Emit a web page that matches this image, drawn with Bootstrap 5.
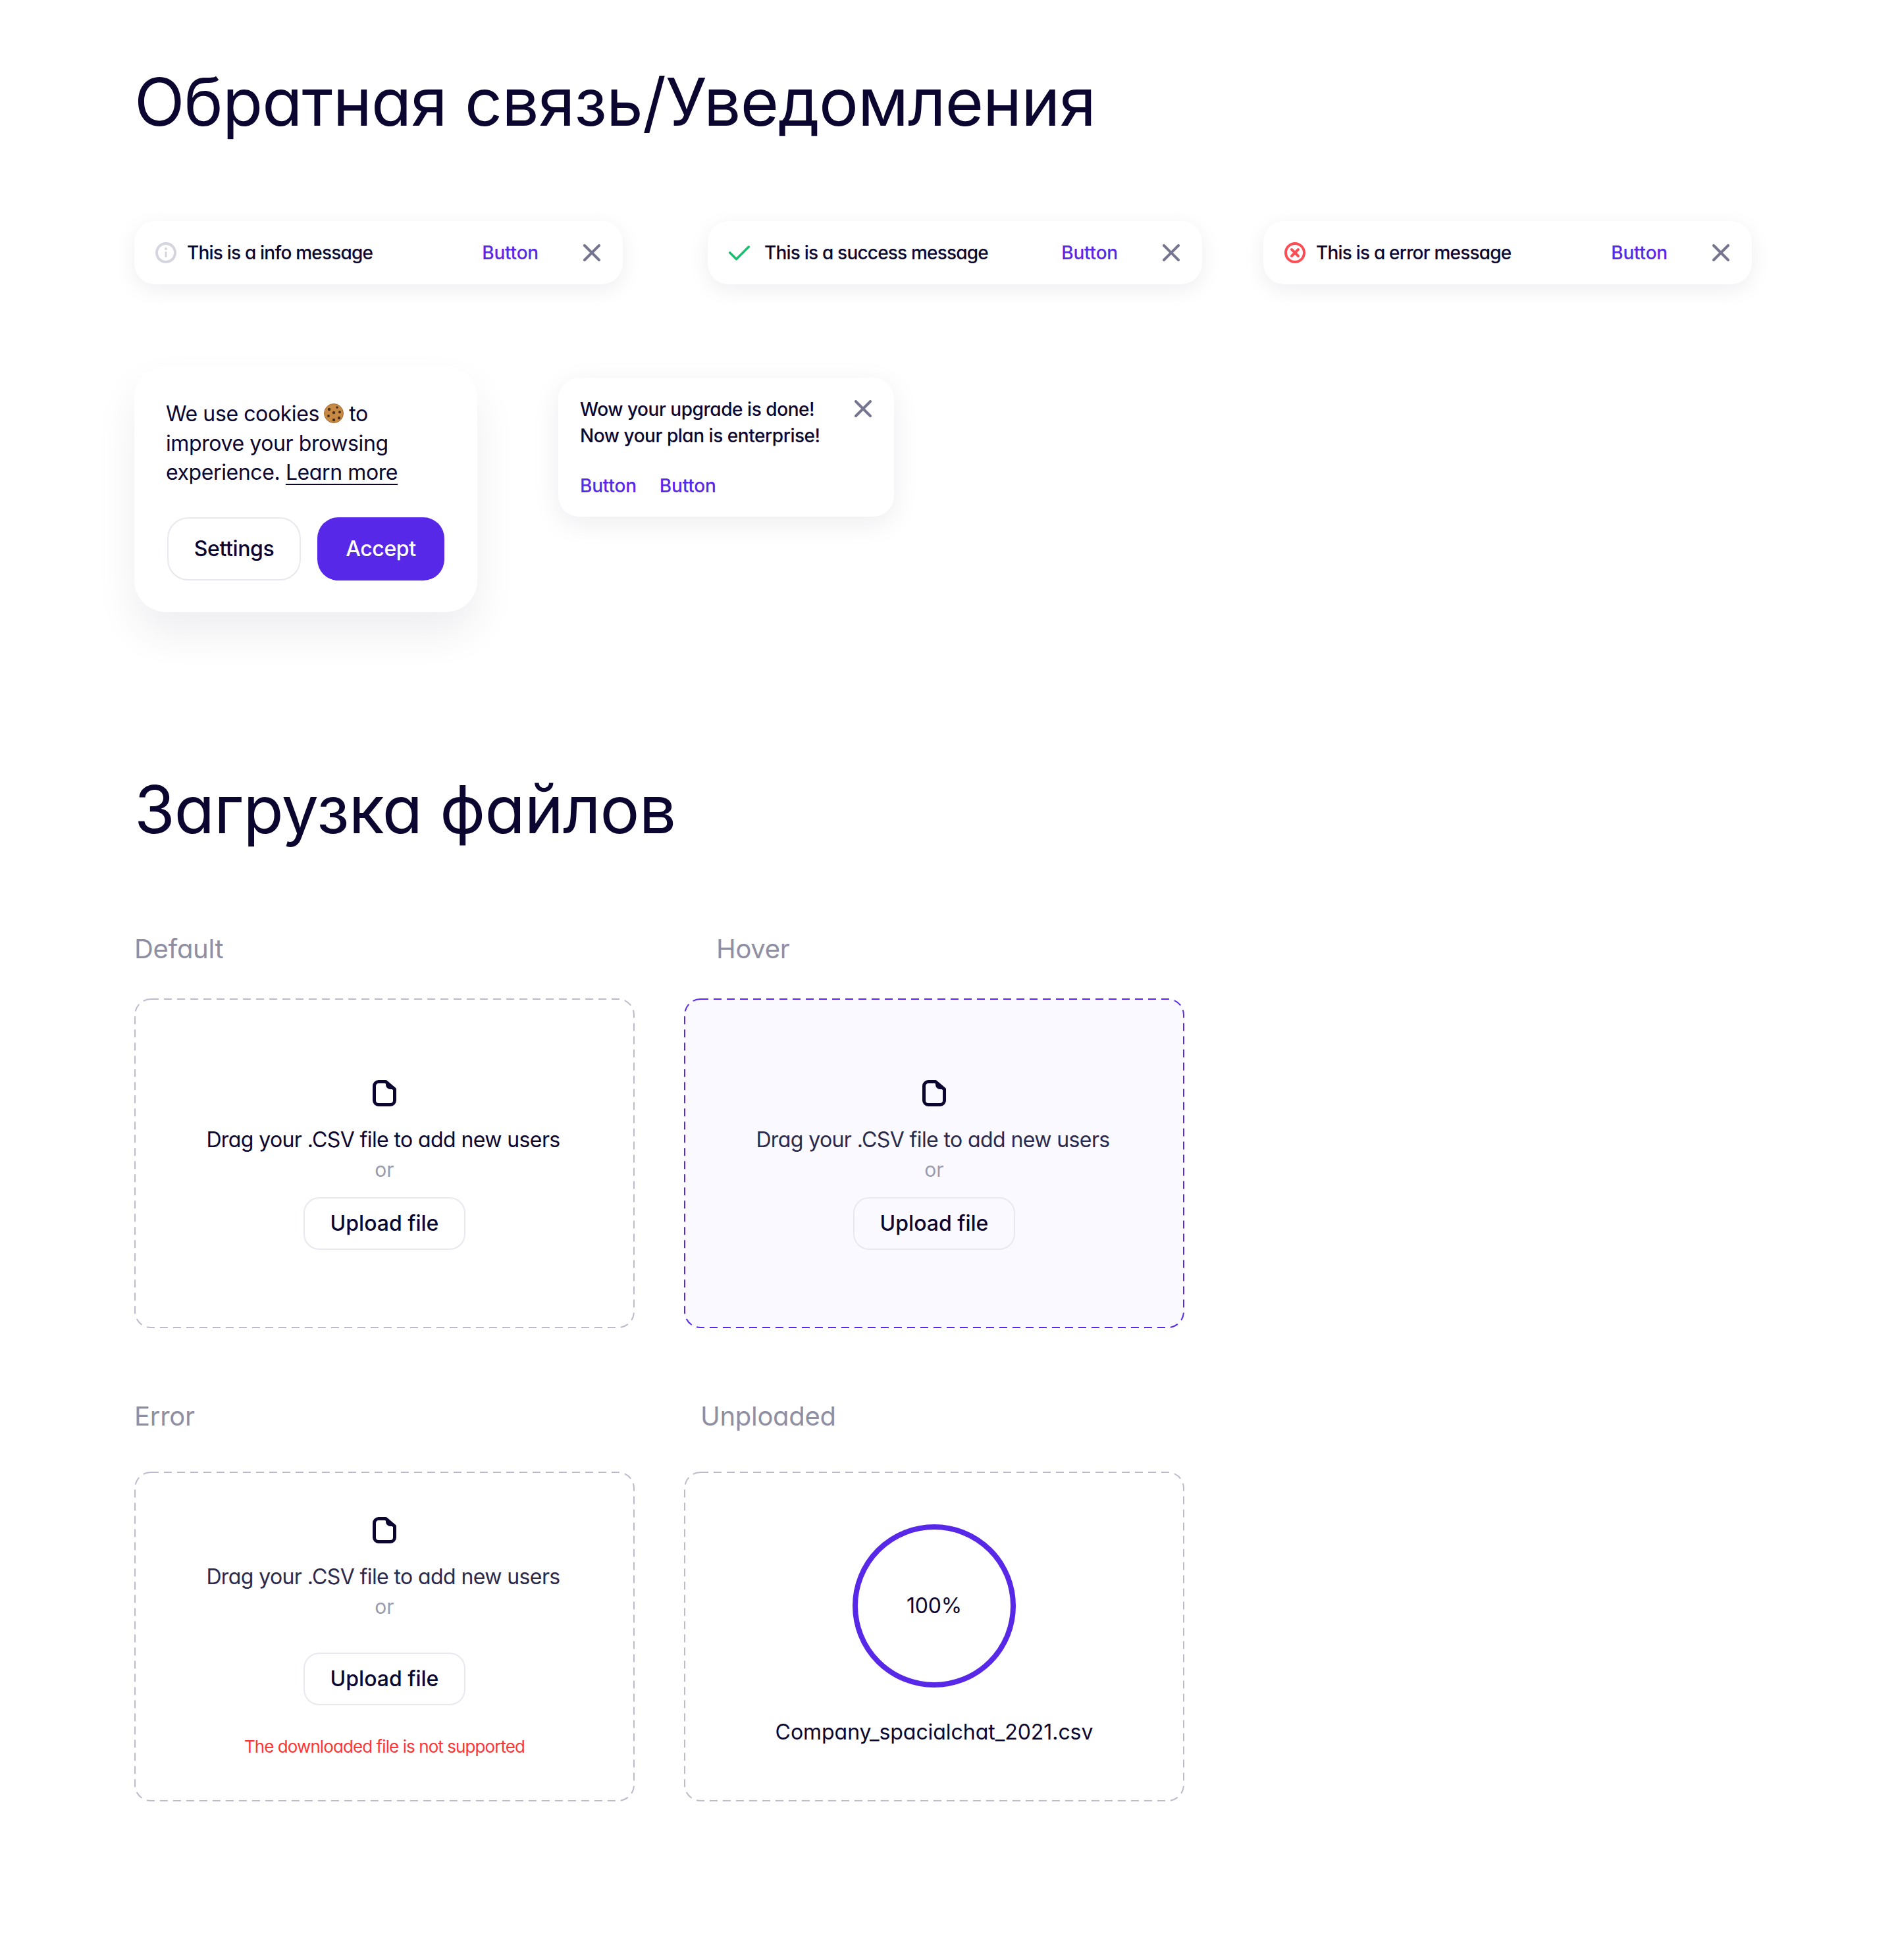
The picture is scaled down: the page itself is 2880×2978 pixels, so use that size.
<!DOCTYPE html>
<html lang="ru">
<head>
<meta charset="utf-8">
<title>Обратная связь/Уведомления</title>
<link href="https://cdn.jsdelivr.net/npm/bootstrap@5.3.0/dist/css/bootstrap.min.css" rel="stylesheet">
<style>
:root{--ink:#0b0630;--violet:#5728e8;--cross:#76758f;--muted:#8f8fa3;--line:#e8e8ef}
body{background:#fff;color:var(--ink);font-family:Inter,"Noto Sans",sans-serif;font-feature-settings:"cv11";}
.sheet{padding:95px 0 240px 204px;width:2880px}
.head-xl{font-size:100px;line-height:120px;font-weight:400;letter-spacing:-.9px;margin:0;white-space:nowrap;font-family:Inter,"Noto Sans",sans-serif}
.note-row{margin-top:121px}
.note{height:96px;border-radius:32px;background:#fff;box-shadow:0 8px 32px rgba(20,20,60,.07);font-size:28px;font-weight:500;letter-spacing:-.8px;white-space:nowrap}
.note-a{width:742px;margin-right:129px;padding:0 34px 0 32px}
.note-b{width:751px;margin-right:93px;padding:0 34px 0 32px}
.note-c{width:742px;padding:0 34px 0 32px}
.note-ico{width:32px;height:32px;flex:none}
.note-msg{margin-left:16px}
.note-msg-wide{margin-left:22px}
.link-act{color:var(--violet);font-size:28px;font-weight:500;letter-spacing:-.2px;padding:0;border:0;background:none;line-height:40px}
.x-btn{padding:0;border:0;background:none;line-height:0;flex:none}
.x-btn svg{width:26px;height:26px}
.x-gap{margin-left:68px}
.tiles{margin-top:124px;align-items:flex-start}
.cookie{width:521px;height:374px;border-radius:48px;padding:51px 48px 48px;background:#fff;box-shadow:0 32px 64px rgba(20,20,60,.07);border:0;font-size:32px;line-height:44.5px;letter-spacing:-.4px}
.cookie a{color:var(--ink);text-underline-offset:6px;text-decoration-thickness:2px}
.crumb{display:inline-block;width:30px;height:30px;vertical-align:-3px;margin:0 0 0 -2px}
.cookie-btns{margin-top:45px;padding-left:2px;gap:25px}
.btn-soft,.btn-main{height:96px;border-radius:32px;font-size:32px;font-weight:500;letter-spacing:-.4px;padding:0;display:flex;align-items:center;justify-content:center}
.btn-soft{width:203px;border:2px solid var(--line);color:var(--ink);background:transparent}
.btn-main{width:193px;background:var(--violet);border:0;color:#fff;flex:none}
.toast-box{width:510px;height:211px;margin:18px 0 0 123px;padding:28px 33px;border-radius:32px;border:0;background:#fff;box-shadow:0 10px 40px rgba(20,20,60,.08);font-size:28px;line-height:40px;font-weight:500;letter-spacing:-.45px;white-space:nowrap}
.toast-x{position:absolute;top:34px;right:34px}
.toast-acts{margin-top:36px;gap:35px}
.head-second{margin-top:240px}
.lab{font-size:40px;line-height:56px;color:var(--muted);letter-spacing:-.3px}
.drop-grid{display:grid;grid-template-columns:760px 760px;column-gap:75px;width:1595px}
.lab-1{margin:124px 0 47px}
.lab-2{margin:106px 0 56px}
.pad-hover{padding-left:49px}
.pad-up{padding-left:25px}
.zone{position:relative;height:501px;border-radius:24px;display:flex;flex-direction:column;align-items:center;font-size:32px;text-align:center;white-space:nowrap;letter-spacing:-.6px}
.zone-h{background:#faf9ff}
.frame{position:absolute;inset:0;width:100%;height:100%;pointer-events:none}
.frame rect{x:1px;y:1px;width:calc(100% - 2px);height:calc(100% - 2px);rx:24px;fill:none;stroke:#bcbbce;stroke-width:2;stroke-dasharray:12 8}
.zone-h .frame rect{stroke:var(--violet)}
.doc{width:36px;height:40px;flex:none}
.z-main{padding-top:124px}
.z-err{padding-top:69px}
.ln-a{line-height:44px;margin-top:29px;padding-right:4px}
.ln-soft{color:#2b2a4c}
.ln-or{font-size:30px;line-height:40px;margin-top:3px;color:#9b9bb0;letter-spacing:0}
.up-btn{width:246px;height:80px;border-radius:24px;font-size:32px;font-weight:500;letter-spacing:0;border:2px solid var(--line);color:var(--ink);background:transparent;padding:0;display:flex;align-items:center;justify-content:center;margin-top:22px}
.up-btn-err{margin-top:50px}
.err-line{color:#ff3535;font-size:26px;line-height:36px;margin-top:45px;letter-spacing:-.92px}
.ring{width:248px;height:248px;border-radius:50%;border:8px solid var(--violet);display:flex;align-items:center;justify-content:center;margin-top:80px;font-size:32px;letter-spacing:-.2px}
.fname{margin-top:46px;line-height:44px;letter-spacing:-.05px}
</style>
</head>
<body>
<div class="sheet">
  <h1 class="head-xl">Обратная связь/Уведомления</h1>

  <div class="d-flex note-row">
    <div class="note note-a d-flex align-items-center">
      <svg class="note-ico" viewBox="0 0 32 32"><circle cx="16" cy="16" r="14" fill="none" stroke="#d5d5e0" stroke-width="4"/><circle cx="16" cy="10" r="2" fill="#d5d5e0"/><rect x="14.5" y="14" width="3" height="9" rx="1.5" fill="#d5d5e0"/></svg>
      <span class="note-msg">This is a info message</span>
      <button class="link-act ms-auto" type="button">Button</button>
      <button class="x-btn x-gap" type="button" aria-label="Close"><svg viewBox="0 0 26 26"><path d="M2 2 24 24M24 2 2 24" stroke="#76758f" stroke-width="4" stroke-linecap="round"/></svg></button>
    </div>
    <div class="note note-b d-flex align-items-center">
      <svg class="note-ico" viewBox="0 0 36 32"><path d="M2 16 13 27 34 6" fill="none" stroke="#12c26f" stroke-width="4" stroke-linecap="round" stroke-linejoin="round"/></svg>
      <span class="note-msg-wide">This is a success message</span>
      <button class="link-act ms-auto" type="button">Button</button>
      <button class="x-btn x-gap" type="button" aria-label="Close"><svg viewBox="0 0 26 26"><path d="M2 2 24 24M24 2 2 24" stroke="#76758f" stroke-width="4" stroke-linecap="round"/></svg></button>
    </div>
    <div class="note note-c d-flex align-items-center">
      <svg class="note-ico" viewBox="0 0 32 32"><circle cx="16" cy="16" r="14" fill="none" stroke="#ff4d55" stroke-width="4"/><path d="M11 11 21 21M21 11 11 21" stroke="#ff4d55" stroke-width="4" stroke-linecap="round"/></svg>
      <span class="note-msg">This is a error message</span>
      <button class="link-act ms-auto" type="button">Button</button>
      <button class="x-btn x-gap" type="button" aria-label="Close"><svg viewBox="0 0 26 26"><path d="M2 2 24 24M24 2 2 24" stroke="#76758f" stroke-width="4" stroke-linecap="round"/></svg></button>
    </div>
  </div>

  <div class="d-flex tiles">
    <div class="card cookie">
      <div>We use cookies <svg class="crumb" viewBox="0 0 30 30"><circle cx="15" cy="15" r="14.5" fill="#c68a45"/><circle cx="15" cy="15" r="14.5" fill="none" stroke="#a66a2c" stroke-width="1"/><circle cx="8" cy="9" r="2.2" fill="#4a2c18"/><circle cx="20" cy="6" r="1.8" fill="#4a2c18"/><circle cx="15" cy="14" r="2.2" fill="#4a2c18"/><circle cx="24" cy="13" r="2" fill="#4a2c18"/><circle cx="7" cy="19" r="2" fill="#4a2c18"/><circle cx="15" cy="25" r="2.2" fill="#4a2c18"/><circle cx="23" cy="22" r="2.2" fill="#4a2c18"/></svg> to<br>improve your browsing<br>experience. <a href="#">Learn more</a></div>
      <div class="d-flex cookie-btns">
        <button class="btn btn-soft" type="button">Settings</button>
        <button class="btn btn-main" type="button">Accept</button>
      </div>
    </div>
    <div class="card toast-box">
      <button class="x-btn toast-x" type="button" aria-label="Close"><svg viewBox="0 0 26 26"><path d="M2 2 24 24M24 2 2 24" stroke="#76758f" stroke-width="4" stroke-linecap="round"/></svg></button>
      <div>Wow your upgrade is done!<br>Now your plan is enterprise!</div>
      <div class="d-flex toast-acts">
        <button class="link-act" type="button">Button</button>
        <button class="link-act" type="button">Button</button>
      </div>
    </div>
  </div>

  <h2 class="head-xl head-second">Загрузка файлов</h2>

  <div class="drop-grid">
    <div class="lab lab-1">Default</div>
    <div class="lab lab-1 pad-hover">Hover</div>
    <div class="zone z-main">
      <svg class="frame"><rect/></svg>
      <svg class="doc" viewBox="0 0 36 40"><path d="M9 2.5H20L33.5 14V31A6.5 6.5 0 0 1 27 37.500H9A6.500 6.500 0 0 1 2.500 31V9A6.500 6.500 0 0 1 9 2.500Z" fill="none" stroke="#0b0630" stroke-width="5" stroke-linejoin="round"/><path d="M20 2.500 33.500 14H27A7 7 0 0 1 20 7Z" fill="#0b0630"/></svg>
      <div class="ln-a">Drag your .CSV file to add new users</div>
      <div class="ln-or">or</div>
      <button class="btn up-btn" type="button">Upload file</button>
    </div>
    <div class="zone zone-h z-main">
      <svg class="frame"><rect/></svg>
      <svg class="doc" viewBox="0 0 36 40"><path d="M9 2.5H20L33.5 14V31A6.5 6.5 0 0 1 27 37.500H9A6.500 6.500 0 0 1 2.500 31V9A6.500 6.500 0 0 1 9 2.500Z" fill="none" stroke="#0b0630" stroke-width="5" stroke-linejoin="round"/><path d="M20 2.500 33.500 14H27A7 7 0 0 1 20 7Z" fill="#0b0630"/></svg>
      <div class="ln-a ln-soft">Drag your .CSV file to add new users</div>
      <div class="ln-or">or</div>
      <button class="btn up-btn" type="button">Upload file</button>
    </div>
    <div class="lab lab-2">Error</div>
    <div class="lab lab-2 pad-up">Unploaded</div>
    <div class="zone z-err">
      <svg class="frame"><rect/></svg>
      <svg class="doc" viewBox="0 0 36 40"><path d="M9 2.5H20L33.5 14V31A6.5 6.5 0 0 1 27 37.500H9A6.500 6.500 0 0 1 2.500 31V9A6.500 6.500 0 0 1 9 2.500Z" fill="none" stroke="#0b0630" stroke-width="5" stroke-linejoin="round"/><path d="M20 2.500 33.500 14H27A7 7 0 0 1 20 7Z" fill="#0b0630"/></svg>
      <div class="ln-a ln-soft">Drag your .CSV file to add new users</div>
      <div class="ln-or">or</div>
      <button class="btn up-btn up-btn-err" type="button">Upload file</button>
      <div class="err-line">The downloaded file is not supported</div>
    </div>
    <div class="zone">
      <svg class="frame"><rect/></svg>
      <div class="ring">100%</div>
      <div class="fname">Company_spacialchat_2021.csv</div>
    </div>
  </div>
</div>
</body>
</html>
